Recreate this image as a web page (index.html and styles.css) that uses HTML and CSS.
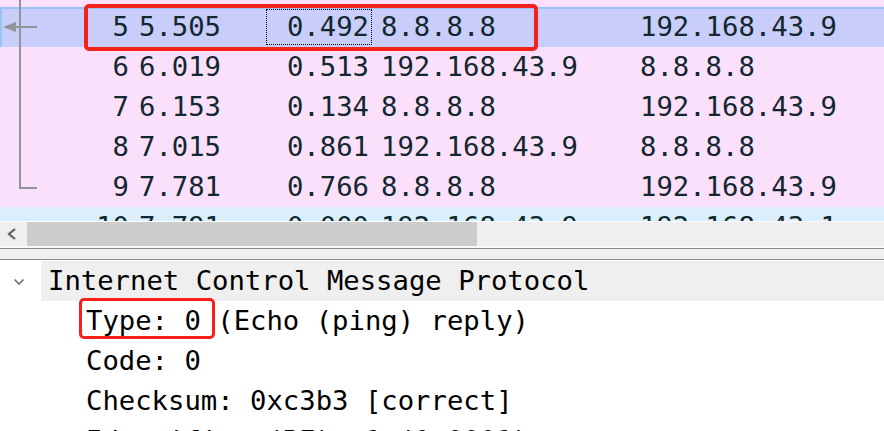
FILE: index.html
```html
<!DOCTYPE html>
<html>
<head>
<meta charset="utf-8">
<link rel="stylesheet" href="styles.css">
</head>
<body>
<div class="screen">
  <div class="packets">
    <div class="row sel">
      <div class="c no">5</div><div class="c time">5.505</div><div class="c delta focus">0.492</div><div class="c src">8.8.8.8</div><div class="c dst">192.168.43.9</div>
    </div>
    <div class="row">
      <div class="c no">6</div><div class="c time">6.019</div><div class="c delta">0.513</div><div class="c src">192.168.43.9</div><div class="c dst">8.8.8.8</div>
    </div>
    <div class="row">
      <div class="c no">7</div><div class="c time">6.153</div><div class="c delta">0.134</div><div class="c src">8.8.8.8</div><div class="c dst">192.168.43.9</div>
    </div>
    <div class="row">
      <div class="c no">8</div><div class="c time">7.015</div><div class="c delta">0.861</div><div class="c src">192.168.43.9</div><div class="c dst">8.8.8.8</div>
    </div>
    <div class="row">
      <div class="c no">9</div><div class="c time">7.781</div><div class="c delta">0.766</div><div class="c src">8.8.8.8</div><div class="c dst">192.168.43.9</div>
    </div>
    <div class="row udp">
      <div class="c no">10</div><div class="c time">7.791</div><div class="c delta">0.000</div><div class="c src">192.168.43.9</div><div class="c dst">192.168.43.1</div>
    </div>

    <div class="tree-v"></div>
    <div class="tree-h"></div>
    <svg class="tree-arrow" width="40" height="14" viewBox="0 0 40 14">
      <line x1="8" y1="7" x2="36" y2="7" stroke="#8e969b" stroke-width="2"/>
      <polygon points="2,7 15,2 15,12" fill="#8e969b"/>
    </svg>
    <div class="mark mark1"></div>
  </div>

  <div class="hscroll">
    <div class="sb-btn">
      <svg width="12" height="14" viewBox="0 0 12 14"><polyline points="9,2 3,7 9,12" fill="none" stroke="#606060" stroke-width="2.2"/></svg>
    </div>
    <div class="sb-thumb"></div>
    <div class="sb-track"></div>
  </div>

  <div class="splitter"></div>

  <div class="details">
    <div class="drow top">
      <div class="chev">
        <svg width="12" height="8" viewBox="0 0 12 8"><polyline points="1.5,1.5 6,6 10.5,1.5" fill="none" stroke="#6f6f6f" stroke-width="1.6"/></svg>
      </div>
      <div class="dtext hl">Internet Control Message Protocol</div>
    </div>
    <div class="drow sub">Type: 0 (Echo (ping) reply)</div>
    <div class="drow sub">Code: 0</div>
    <div class="drow sub">Checksum: 0xc3b3 [correct]</div>
    <div class="drow sub">Identifier (BE): 1 (0x0001)</div>
    <div class="mark mark2"></div>
  </div>
</div>
</body>
</html>
```

FILE: styles.css
```css
* { box-sizing: border-box; margin: 0; padding: 0; }
html, body { width: 884px; height: 431px; overflow: hidden; background: #ffffff; }
body {
  font-family: "DejaVu Sans Mono", "Liberation Mono", monospace;
  font-size: 27.25px;
}
.screen { position: relative; width: 884px; height: 431px; overflow: hidden; }

.packets {
  position: relative;
  height: 221px;
  padding-top: 7px;
  background: #fbe0fc;
  overflow: hidden;
  color: #12272e;
}
.row {
  display: grid;
  grid-template-columns: 134px 132px 106px 260px 1fr;
  height: 40px;
  line-height: 40px;
  white-space: nowrap;
}
.row.sel {
  background: #c9cdf9;
  box-shadow: inset 2px 2px 0 #99c2f5;
}
.row.udp { background: #daeefe; }
.c.no { text-align: right; padding-right: 5px; }
.c.time { padding-left: 5px; }
.c.delta { text-align: right; padding-right: 3px; position: relative; }
.c.src { padding-left: 9px; }
.c.dst { padding-left: 8px; }
.focus::after {
  content: "";
  position: absolute;
  left: 0; right: 0; top: 2px; bottom: 2px;
  border: 1px dotted #000;
}

.tree-v {
  position: absolute;
  left: 19px; top: 0;
  width: 2px; height: 189px;
  background: #8e969b;
}
.tree-h {
  position: absolute;
  left: 19px; top: 187px;
  width: 18px; height: 2px;
  background: #8e969b;
}
.tree-arrow { position: absolute; left: 1px; top: 20px; }

.mark {
  position: absolute;
  border: 4px solid #f5221b;
  border-radius: 5px;
}
.mark1 { left: 84px; top: 4px; width: 454px; height: 47px; }
.mark2 { left: 79px; top: 38px; width: 136px; height: 41px; border-width: 3.5px; }

.hscroll {
  display: flex;
  height: 25px;
  background: #efefef;
  border-top: 1px solid #ffffff;
}
.sb-btn {
  width: 27px;
  display: flex;
  align-items: center;
  justify-content: center;
  padding-right: 4px;
}
.sb-thumb { width: 450px; background: #cdcdcd; }
.sb-track { flex: 1; }

.splitter {
  height: 14px;
  background: #efefef;
  border-top: 2px solid #f8f8f8;
  border-bottom: 1px solid #8c8c8c;
  position: relative;
}
.splitter::before {
  content: "";
  position: absolute;
  left: 0; right: 0; top: 0;
  height: 1px;
  background: #8c8c8c;
}

.details {
  position: relative;
  padding-top: 1px;
  color: #000;
  white-space: nowrap;
}
.drow { height: 40px; line-height: 40px; }
.drow.top { display: flex; }
.chev {
  width: 41px;
  display: flex;
  align-items: center;
  padding-left: 13px;
  padding-top: 2px;
}
.dtext.hl { flex: 1; background: #efefef; padding-left: 7px; }
.drow.sub { padding-left: 86px; }
```
